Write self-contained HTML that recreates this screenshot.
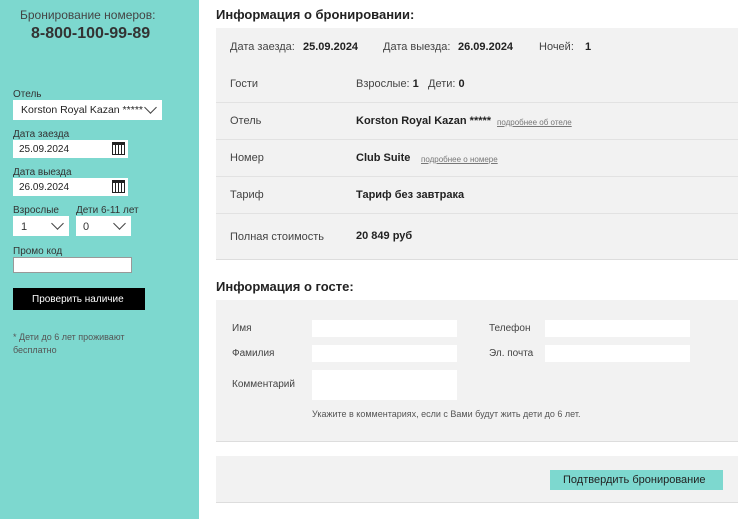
<!DOCTYPE html>
<html><head><meta charset="utf-8"><style>
*{margin:0;padding:0;box-sizing:border-box}
body{width:752px;height:519px;background:#fff;font-family:"Liberation Sans","DejaVu Sans",sans-serif;position:relative;overflow:hidden;color:#333}
.a{position:absolute;white-space:nowrap}
.side{position:absolute;left:0;top:0;width:199px;height:519px;background:#7dd8cf}
.lbl{font-size:10px;color:#333}
.box{position:absolute;background:#fff}
.chev{position:absolute;width:9px;height:9px;border-right:1.5px solid #444;border-bottom:1.5px solid #444;transform:rotate(45deg)}
.panel{position:absolute;left:216px;width:522px;background:#f2f2f2;border-bottom:1px solid #ddd}
.sep{position:absolute;left:216px;width:522px;height:1px;background:#e2e2e2}
.t{font-size:11px;color:#444}
.b{font-size:11px;font-weight:bold;color:#222}
.lnk{font-size:8px;color:#777;text-decoration:underline}
h2{position:absolute;font-size:13px;font-weight:bold;color:#222;white-space:nowrap}
.in{position:absolute;background:#fff;height:17px}
.cal{position:absolute;width:13px;height:13px;border:1.5px solid #222;border-top-width:3px;background:repeating-linear-gradient(90deg,#fff 0 2px,#222 2px 3px)}
</style></head><body>
<div class="side"></div>
<div class="a" style="left:20px;top:8px;font-size:12px;color:#444">Бронирование номеров:</div>
<div class="a" style="left:31px;top:25px;font-size:16px;font-weight:bold;color:#333">8-800-100-99-89</div>

<div class="a lbl" style="left:13px;top:89px">Отель</div>
<div class="box" style="left:13px;top:100px;width:149px;height:20px"></div>
<div class="a" style="left:21px;top:104px;font-size:10.5px;color:#222">Korston Royal Kazan *****</div>
<div class="chev" style="left:146px;top:103px"></div>

<div class="a lbl" style="left:13px;top:129px">Дата заезда</div>
<div class="box" style="left:13px;top:140px;width:115px;height:18px"></div>
<div class="a" style="left:19px;top:144px;font-size:10px;color:#222">25.09.2024</div>
<div class="cal" style="left:112px;top:142px"></div>

<div class="a lbl" style="left:13px;top:167px">Дата выезда</div>
<div class="box" style="left:13px;top:178px;width:115px;height:18px"></div>
<div class="a" style="left:19px;top:182px;font-size:10px;color:#222">26.09.2024</div>
<div class="cal" style="left:112px;top:180px"></div>

<div class="a lbl" style="left:13px;top:205px">Взрослые</div>
<div class="a lbl" style="left:76px;top:205px">Дети 6-11 лет</div>
<div class="box" style="left:13px;top:216px;width:56px;height:20px"></div>
<div class="box" style="left:76px;top:216px;width:55px;height:20px"></div>
<div class="a" style="left:21px;top:221px;font-size:11px">1</div>
<div class="a" style="left:83px;top:221px;font-size:11px">0</div>
<div class="chev" style="left:53px;top:219px"></div>
<div class="chev" style="left:115px;top:219px"></div>

<div class="a lbl" style="left:13px;top:246px">Промо код</div>
<div class="box" style="left:13px;top:257px;width:119px;height:16px;border:1px solid #999"></div>
<div class="box" style="left:13px;top:288px;width:132px;height:22px;background:#000"></div>
<div class="a" style="left:32px;top:294px;font-size:10px;color:#fff">Проверить наличие</div>
<div class="a" style="left:13px;top:331px;font-size:9px;color:#555;line-height:13px">* Дети до 6 лет проживают<br>бесплатно</div>

<h2 style="left:216px;top:7px">Информация о бронировании:</h2>
<div class="panel" style="top:28px;height:232px"></div>
<div class="sep" style="top:102px"></div>
<div class="sep" style="top:139px"></div>
<div class="sep" style="top:176px"></div>
<div class="sep" style="top:213px"></div>
<div class="a t" style="left:230px;top:41px">Дата заезда:</div>
<div class="a b" style="left:303px;top:41px">25.09.2024</div>
<div class="a t" style="left:383px;top:41px">Дата выезда:</div>
<div class="a b" style="left:458px;top:41px">26.09.2024</div>
<div class="a t" style="left:539px;top:41px">Ночей:</div>
<div class="a b" style="left:585px;top:41px">1</div>
<div class="a t" style="left:230px;top:78px">Гости</div>
<div class="a t" style="left:356px;top:78px">Взрослые: <b style="color:#222">1</b></div>
<div class="a t" style="left:428px;top:78px">Дети: <b style="color:#222">0</b></div>
<div class="a t" style="left:230px;top:115px">Отель</div>
<div class="a b" style="left:356px;top:115px">Korston Royal Kazan *****</div>
<div class="a lnk" style="left:497px;top:118px">подробнее об отеле</div>
<div class="a t" style="left:230px;top:152px">Номер</div>
<div class="a b" style="left:356px;top:152px">Club Suite</div>
<div class="a lnk" style="left:421px;top:155px">подробнее о номере</div>
<div class="a t" style="left:230px;top:189px">Тариф</div>
<div class="a b" style="left:356px;top:189px">Тариф без завтрака</div>
<div class="a t" style="left:230px;top:231px">Полная стоимость</div>
<div class="a b" style="left:356px;top:230px">20 849 руб</div>

<h2 style="left:216px;top:279px">Информация о госте:</h2>
<div class="panel" style="top:300px;height:142px"></div>
<div class="a t" style="left:232px;top:323px;font-size:10px">Имя</div>
<div class="a t" style="left:232px;top:348px;font-size:10px">Фамилия</div>
<div class="a t" style="left:232px;top:379px;font-size:10px">Комментарий</div>
<div class="a t" style="left:489px;top:323px;font-size:10px">Телефон</div>
<div class="a t" style="left:489px;top:348px;font-size:10px">Эл. почта</div>
<div class="in" style="left:312px;top:320px;width:145px"></div>
<div class="in" style="left:312px;top:345px;width:145px"></div>
<div class="in" style="left:312px;top:370px;width:145px;height:30px"></div>
<div class="in" style="left:545px;top:320px;width:145px"></div>
<div class="in" style="left:545px;top:345px;width:145px"></div>
<div class="a t" style="left:312px;top:409px;font-size:9px;color:#555">Укажите в комментариях, если с Вами будут жить дети до 6 лет.</div>

<div class="panel" style="top:456px;height:47px"></div>
<div class="box" style="left:550px;top:470px;width:173px;height:20px;background:#7dd8cf"></div>
<div class="a" style="left:563px;top:474px;font-size:11px;color:#222">Подтвердить бронирование</div>
</body></html>
